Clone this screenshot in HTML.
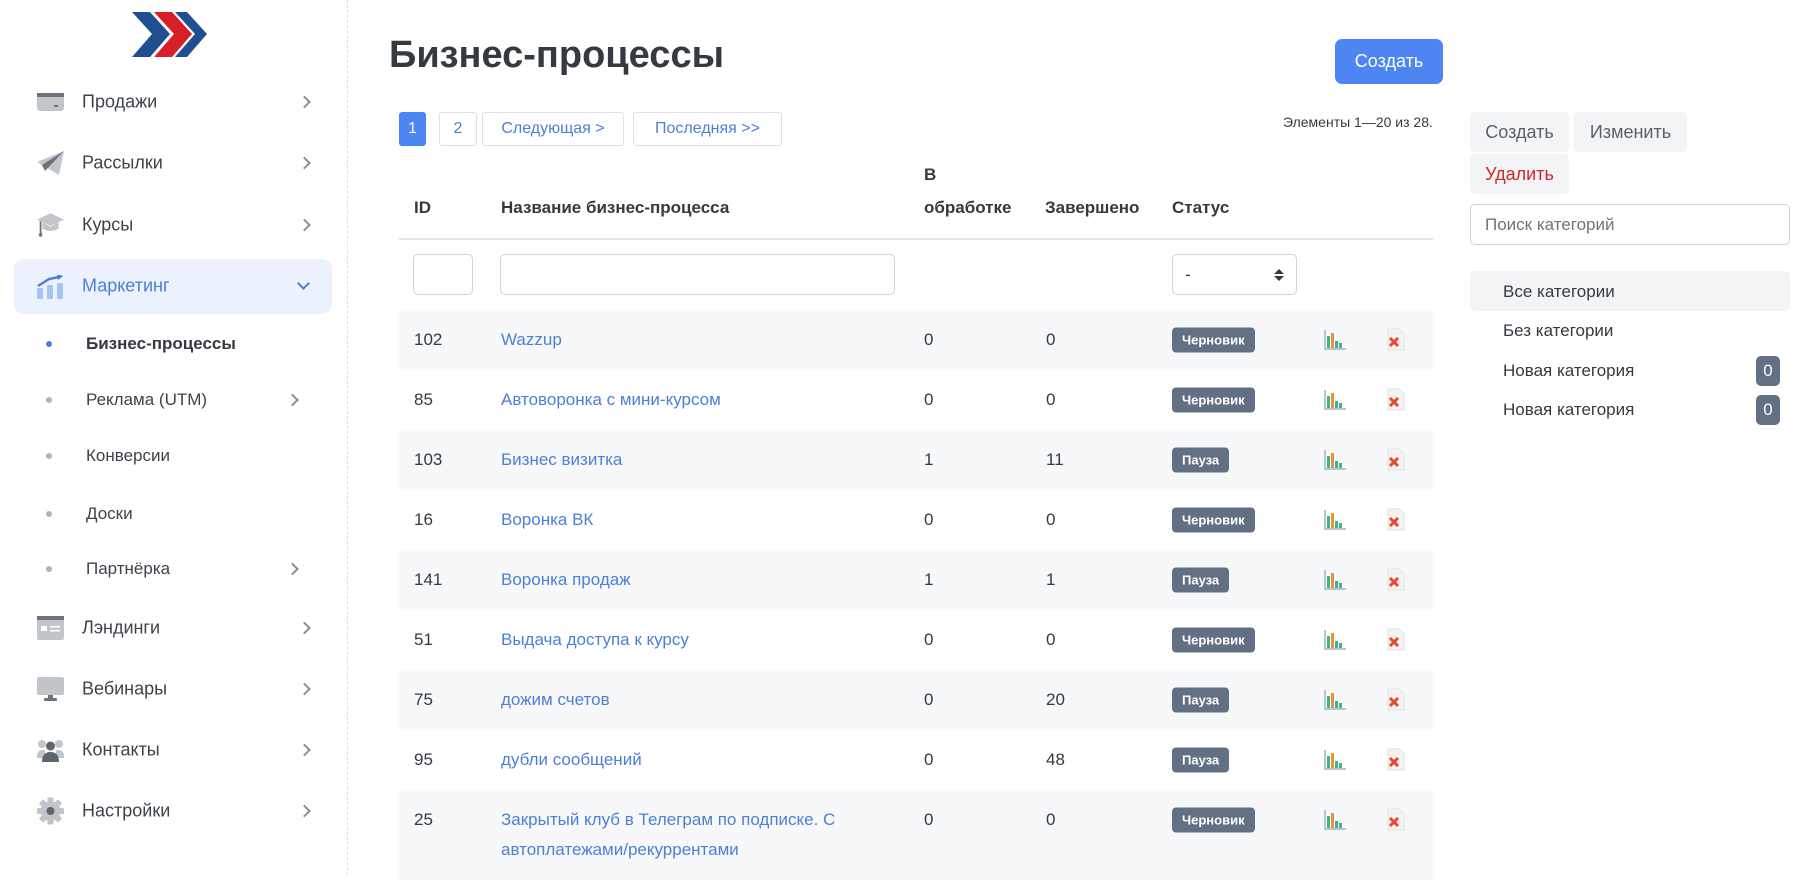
<!DOCTYPE html>
<html><head><meta charset="utf-8"><style>
*{box-sizing:border-box;margin:0;padding:0}
body{width:1802px;height:875px;overflow:hidden;background:#fff;font-family:"Liberation Sans","DejaVu Sans",sans-serif;color:#343a40;position:relative}
.a{position:absolute;white-space:nowrap}
.side{position:absolute;left:0;top:0;width:348px;height:875px;border-right:1px dashed #dde0e4}
.ni{position:absolute;left:82px;font-size:18px;color:#3d434a;transform:translateY(-50%)}
.ic{position:absolute;left:37px;width:27px;height:24px;transform:translateY(-50%)}
.chev{position:absolute;left:300px;width:9px;height:9px;border-right:2px solid #8a9097;border-top:2px solid #8a9097;transform:translateY(-50%) rotate(45deg)}
.sub{position:absolute;left:86px;font-size:17px;color:#3d434a;transform:translateY(-50%)}
.dot{position:absolute;left:46px;width:6px;height:6px;border-radius:50%;background:#adb5bd;transform:translateY(-50%)}
.pg{position:absolute;top:112px;height:34px;border:1px solid #dee2e6;border-radius:3px;font-size:16px;color:#4e7ed6;line-height:32px;text-align:center;white-space:nowrap}
.th{position:absolute;font-size:17px;font-weight:bold;color:#343a40;white-space:nowrap}
.row{position:absolute;left:399px;width:1034px;height:60px}
.row.g{background:#f7f8fa}
.c{position:absolute;font-size:17px;top:50%;transform:translateY(-50%);white-space:nowrap}
.lnk{color:#4e7ed6}
.bd{position:absolute;top:50%;transform:translateY(-50%);left:773px;height:25px;padding:0 10px;background:#637083;color:#fff;font-size:13px;font-weight:bold;border-radius:4px;line-height:25px}
.ch{position:absolute;left:925px;top:50%;transform:translateY(-50%)}
.del{position:absolute;left:985px;top:50%;transform:translateY(-50%)}
.rb{position:absolute;height:40px;background:#f3f4f6;border-radius:5px;font-size:18px;line-height:40px;text-align:center;color:#5a6068}
.cat{position:absolute;left:1503px;font-size:17px;color:#343a40;transform:translateY(-50%)}
.cnt{position:absolute;left:1756px;width:24px;height:30px;background:#637083;color:#fff;border-radius:5px;font-size:17px;text-align:center;line-height:30px;transform:translateY(-50%)}
</style></head><body>
<div class="side">
<svg class="a" style="left:130px;top:12px" width="77" height="45" viewBox="0 0 77 45"><polygon points="2,0 20,0 40,22 20,45 2,45 22,22" fill="#1f4f8f"/><polygon points="24,0 42,0 62,22 42,45 24,45 44,22" fill="#d61f26"/><polygon points="45,0 57,0 77,22 57,45 45,45 65,22" fill="#1f4f8f"/></svg>
<svg class="ic" style="top:102px" viewBox="0 0 27 24"><rect x="0" y="3" width="27" height="18" rx="3" fill="#c2c6cb"/><rect x="0" y="3" width="27" height="4" fill="#6c737b"/><rect x="17" y="15" width="4" height="2" fill="#6c737b"/></svg>
<div class="ni" style="top:102px">Продажи</div><div class="chev" style="top:102px"></div>
<svg class="ic" style="top:163px" viewBox="0 0 27 24"><polygon points="0,11 27,0 22,24" fill="#c2c6cb"/><polygon points="5,14 27,0 8,20" fill="#6c737b"/></svg>
<div class="ni" style="top:163px">Рассылки</div><div class="chev" style="top:163px"></div>
<svg class="ic" style="top:225px;height:28px" viewBox="0 0 30 28"><polygon points="0,8 15,1 30,8 15,15" fill="#c2c6cb"/><path d="M6,11 v7 q9,5 18,0 v-7 l-9,5z" fill="#c2c6cb"/><rect x="3" y="10" width="2" height="14" fill="#6c737b"/><circle cx="4" cy="25" r="2" fill="#6c737b"/></svg>
<div class="ni" style="top:225px">Курсы</div><div class="chev" style="top:225px"></div>
<div class="a" style="left:14px;top:259px;width:318px;height:55px;background:#ebf1fd;border-radius:10px"></div>
<svg class="ic" style="top:287px" viewBox="0 0 27 24"><rect x="0" y="13" width="6" height="11" rx="1" fill="#a7c2f5"/><rect x="10" y="10" width="6" height="14" rx="1" fill="#a7c2f5"/><rect x="20" y="8" width="6" height="16" rx="1" fill="#a7c2f5"/><path d="M1,11 L12,4 L22,2" stroke="#4e7ed6" stroke-width="2.5" fill="none"/><polygon points="20,-1 26,1 21,5" fill="#4e7ed6"/></svg>
<div class="ni" style="top:286px;color:#4e7ed6">Маркетинг</div><div class="a" style="left:299px;top:279px;width:9px;height:9px;border-right:2px solid #4e7ed6;border-bottom:2px solid #4e7ed6;transform:rotate(45deg)"></div>
<div class="dot" style="top:344px;background:#4e7ed6"></div><div class="sub" style="top:344px;font-weight:bold;color:#343a40">Бизнес-процессы</div>
<div class="dot" style="top:400px"></div><div class="sub" style="top:400px">Реклама (UTM)</div><div class="chev" style="top:400px;left:288px"></div>
<div class="dot" style="top:456px"></div><div class="sub" style="top:456px">Конверсии</div>
<div class="dot" style="top:514px"></div><div class="sub" style="top:514px">Доски</div>
<div class="dot" style="top:569px"></div><div class="sub" style="top:569px">Партнёрка</div><div class="chev" style="top:569px;left:288px"></div>
<svg class="ic" style="top:628px" viewBox="0 0 27 24"><rect x="0" y="0" width="27" height="24" rx="2" fill="#c2c6cb"/><rect x="0" y="0" width="27" height="4" fill="#6c737b"/><rect x="4" y="10" width="6" height="5" fill="#fff"/><rect x="13" y="10" width="10" height="1.5" fill="#fff"/><rect x="13" y="14" width="10" height="1.5" fill="#fff"/></svg>
<div class="ni" style="top:628px">Лэндинги</div><div class="chev" style="top:628px"></div>
<svg class="ic" style="top:689px" viewBox="0 0 27 24"><rect x="0" y="0" width="27" height="18" rx="2" fill="#c2c6cb"/><rect x="11" y="18" width="5" height="3" fill="#6c737b"/><rect x="7" y="21" width="13" height="3" rx="1" fill="#6c737b"/></svg>
<div class="ni" style="top:689px">Вебинары</div><div class="chev" style="top:689px"></div>
<svg class="ic" style="top:750px" viewBox="0 0 27 24"><circle cx="5" cy="6" r="4" fill="#c2c6cb"/><circle cx="22" cy="6" r="4" fill="#c2c6cb"/><path d="M0,18 q0,-6 6,-6 h2 v8 h-8z M27,18 q0,-6 -6,-6 h-2 v8 h8z" fill="#c2c6cb"/><circle cx="13.5" cy="8" r="4.5" fill="#5d656e"/><path d="M5,24 q0,-10 8.5,-10 q8.5,0 8.5,10z" fill="#5d656e"/></svg>
<div class="ni" style="top:750px">Контакты</div><div class="chev" style="top:750px"></div>
<svg class="ic" style="top:811px;height:27px" viewBox="0 0 27 27"><g fill="#c2c6cb"><circle cx="13.5" cy="13.5" r="10"/><rect x="10.5" y="0" width="6" height="27" rx="1"/><rect x="0" y="10.5" width="27" height="6" rx="1"/><rect x="10.5" y="0" width="6" height="27" rx="1" transform="rotate(45 13.5 13.5)"/><rect x="10.5" y="0" width="6" height="27" rx="1" transform="rotate(-45 13.5 13.5)"/></g><circle cx="13.5" cy="13.5" r="4" fill="#5d656e"/></svg>
<div class="ni" style="top:811px">Настройки</div><div class="chev" style="top:811px"></div>
</div>

<div class="a" style="left:389px;top:34px;font-size:38px;font-weight:bold;color:#343a40">Бизнес-процессы</div>
<div class="a" style="left:1335px;top:39px;width:108px;height:45px;background:#4d86f3;border-radius:7px;color:#fff;font-size:18px;line-height:45px;text-align:center">Создать</div>

<div class="pg" style="left:399px;width:27px;background:#4d86f3;border-color:#4d86f3;color:#fff">1</div>
<div class="pg" style="left:439px;width:38px">2</div>
<div class="pg" style="left:482px;width:142px">Следующая &gt;</div>
<div class="pg" style="left:633px;width:149px">Последняя &gt;&gt;</div>
<div class="a" style="left:1283px;top:114px;font-size:14px;color:#343a40">Элементы 1—20 из 28.</div>

<div class="th" style="left:414px;top:198px">ID</div>
<div class="th" style="left:501px;top:198px">Название бизнес-процесса</div>
<div class="th" style="left:924px;top:165px">В</div>
<div class="th" style="left:924px;top:198px">обработке</div>
<div class="th" style="left:1045px;top:198px">Завершено</div>
<div class="th" style="left:1172px;top:198px">Статус</div>
<div class="a" style="left:399px;top:238px;width:1034px;height:2px;background:#e3e5e8"></div>
<div class="a" style="left:413px;top:254px;width:60px;height:41px;border:1px solid #ced4da;border-radius:5px"></div>
<div class="a" style="left:500px;top:254px;width:395px;height:41px;border:1px solid #ced4da;border-radius:5px"></div>
<div class="a" style="left:1172px;top:254px;width:125px;height:41px;border:1px solid #ced4da;border-radius:5px;font-size:17px;line-height:39px;padding-left:12px">-<svg style="position:absolute;right:12px;top:13px" width="10" height="14" viewBox="0 0 10 14"><polygon points="0,6 5,1 10,6" fill="#343a40"/><polygon points="0,8 5,13 10,8" fill="#343a40"/></svg></div>

<svg width="0" height="0" style="position:absolute"><defs>
<g id="chart"><rect x="0" y="0" width="2" height="20" fill="#b9c4cc"/><rect x="0" y="18" width="22" height="2" fill="#b9c4cc"/><rect x="3" y="6" width="3" height="12" fill="#3fb48a"/><rect x="7" y="3" width="3" height="15" fill="#e8923c"/><rect x="11" y="11" width="3" height="7" fill="#3fb48a"/><rect x="15" y="13" width="3" height="5" fill="#3fb48a"/></g>
<g id="del"><path d="M4,0 h10 l6,6 v16 h-16z" fill="#f3f3f3" stroke="#e2e2e2"/><path d="M6,10 l8,8 M14,10 l-8,8" stroke="#e24a2b" stroke-width="3"/></g>
</defs></svg>

<div class="row g" style="top:310px"><div class="c" style="left:15px">102</div><div class="c lnk" style="left:102px">Wazzup</div><div class="c" style="left:525px">0</div><div class="c" style="left:647px">0</div><div class="bd">Черновик</div><svg class="ch" width="22" height="20"><use href="#chart"/></svg><svg class="del" width="22" height="24"><use href="#del"/></svg></div>
<div class="row" style="top:370px"><div class="c" style="left:15px">85</div><div class="c lnk" style="left:102px">Автоворонка с мини-курсом</div><div class="c" style="left:525px">0</div><div class="c" style="left:647px">0</div><div class="bd">Черновик</div><svg class="ch" width="22" height="20"><use href="#chart"/></svg><svg class="del" width="22" height="24"><use href="#del"/></svg></div>
<div class="row g" style="top:430px"><div class="c" style="left:15px">103</div><div class="c lnk" style="left:102px">Бизнес визитка</div><div class="c" style="left:525px">1</div><div class="c" style="left:647px">11</div><div class="bd">Пауза</div><svg class="ch" width="22" height="20"><use href="#chart"/></svg><svg class="del" width="22" height="24"><use href="#del"/></svg></div>
<div class="row" style="top:490px"><div class="c" style="left:15px">16</div><div class="c lnk" style="left:102px">Воронка ВК</div><div class="c" style="left:525px">0</div><div class="c" style="left:647px">0</div><div class="bd">Черновик</div><svg class="ch" width="22" height="20"><use href="#chart"/></svg><svg class="del" width="22" height="24"><use href="#del"/></svg></div>
<div class="row g" style="top:550px"><div class="c" style="left:15px">141</div><div class="c lnk" style="left:102px">Воронка продаж</div><div class="c" style="left:525px">1</div><div class="c" style="left:647px">1</div><div class="bd">Пауза</div><svg class="ch" width="22" height="20"><use href="#chart"/></svg><svg class="del" width="22" height="24"><use href="#del"/></svg></div>
<div class="row" style="top:610px"><div class="c" style="left:15px">51</div><div class="c lnk" style="left:102px">Выдача доступа к курсу</div><div class="c" style="left:525px">0</div><div class="c" style="left:647px">0</div><div class="bd">Черновик</div><svg class="ch" width="22" height="20"><use href="#chart"/></svg><svg class="del" width="22" height="24"><use href="#del"/></svg></div>
<div class="row g" style="top:670px"><div class="c" style="left:15px">75</div><div class="c lnk" style="left:102px">дожим счетов</div><div class="c" style="left:525px">0</div><div class="c" style="left:647px">20</div><div class="bd">Пауза</div><svg class="ch" width="22" height="20"><use href="#chart"/></svg><svg class="del" width="22" height="24"><use href="#del"/></svg></div>
<div class="row" style="top:730px"><div class="c" style="left:15px">95</div><div class="c lnk" style="left:102px">дубли сообщений</div><div class="c" style="left:525px">0</div><div class="c" style="left:647px">48</div><div class="bd">Пауза</div><svg class="ch" width="22" height="20"><use href="#chart"/></svg><svg class="del" width="22" height="24"><use href="#del"/></svg></div>
<div class="row g" style="top:790px;height:90px"><div class="c" style="left:15px;top:30px">25</div><div class="c lnk" style="left:102px;top:45px;line-height:30px;white-space:normal;width:440px">Закрытый клуб в Телеграм по подписке. С автоплатежами/рекуррентами</div><div class="c" style="left:525px;top:30px">0</div><div class="c" style="left:647px;top:30px">0</div><div class="bd" style="top:30px">Черновик</div><svg class="ch" style="top:30px" width="22" height="20"><use href="#chart"/></svg><svg class="del" style="top:30px" width="22" height="24"><use href="#del"/></svg></div>

<div class="rb" style="left:1470px;top:112px;width:99px">Создать</div>
<div class="rb" style="left:1574px;top:112px;width:113px">Изменить</div>
<div class="rb" style="left:1470px;top:154px;width:99px;color:#d0262e">Удалить</div>
<div class="a" style="left:1470px;top:204px;width:320px;height:41px;border:1px solid #ced4da;border-radius:5px;font-size:17px;color:#6c757d;line-height:39px;padding-left:14px">Поиск категорий</div>
<div class="a" style="left:1470px;top:271px;width:320px;height:40px;background:#f3f4f6;border-radius:5px"></div>
<div class="cat" style="top:292px">Все категории</div>
<div class="cat" style="top:331px">Без категории</div>
<div class="cat" style="top:371px">Новая категория</div><div class="cnt" style="top:371px">0</div>
<div class="cat" style="top:410px">Новая категория</div><div class="cnt" style="top:410px">0</div>
</body></html>
